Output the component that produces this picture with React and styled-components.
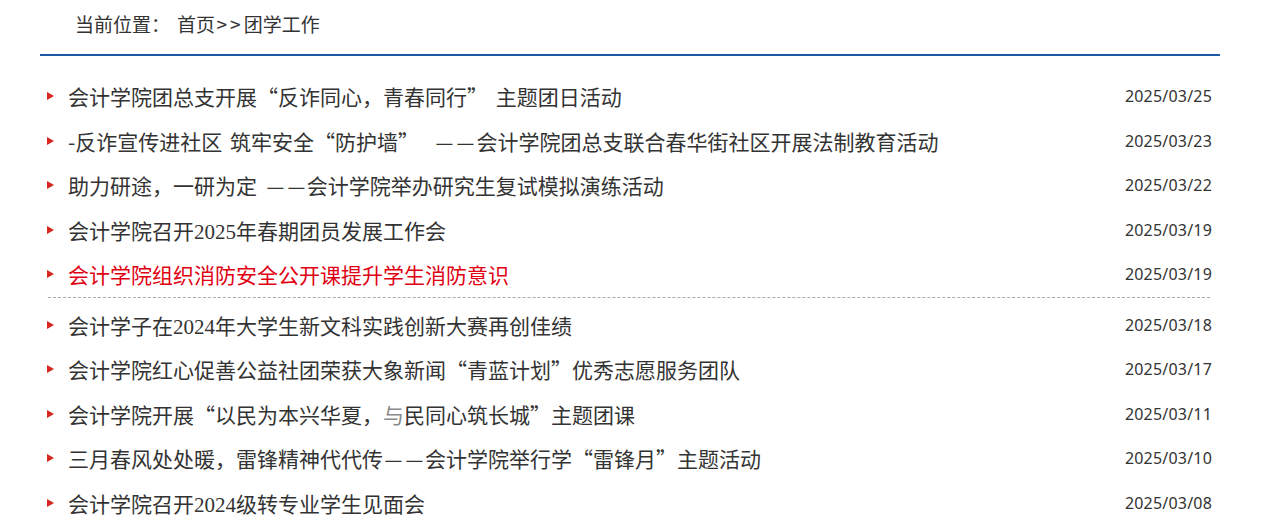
import styled, {createGlobalStyle} from 'styled-components';

const GlobalStyle = createGlobalStyle`
  body {
    margin: 0;
    background: #fff;
    font-family: "Noto Sans CJK SC", "Noto Sans", sans-serif;
    color: #333;
  }
`;

const Page = styled.div`
  width: 1180px;
  margin-left: 40px;
`;

const Breadcrumb = styled.div`
  height: 48px;
  line-height: 48px;
  padding: 0 0 6px 35px;
  border-bottom: 2px solid #1a5aa6;
  font-size: 19px;
  color: #333;
  white-space: pre;
`;

const Crumbs = styled.span`
  margin-left: 7px;
`;

const Sep = styled.span`
  margin-left: 1.5px;
  letter-spacing: 3px;
`;

const List = styled.ul`
  list-style: none;
  margin: 18px 0 0;
  padding: 0 8px 0 7px;
`;

const Row = styled.li`
  display: flex;
  align-items: center;
  height: 44.5px;
`;

const Arrow = styled.span`
  flex: none;
  width: 0;
  height: 0;
  border-top: 4px solid transparent;
  border-bottom: 4px solid transparent;
  border-left: 7px solid #d7261e;
  margin-right: 14px;
`;

const Title = styled.span`
  flex: 1;
  font-size: 21px;
  word-spacing: 3px;
  color: ${p => (p.$hot ? '#e00012' : '#333')};
  white-space: pre;
  overflow: hidden;
`;

const Num = styled.span`
  font-family: "Liberation Serif", serif;
`;

const DashCell = styled.span`
  display: inline-block;
  width: 1em;
  text-align: center;
  vertical-align: top;
  transform: scaleX(0.95);
`;

const Faded = styled.span`
  color: #8a8a8a;
`;

const PubDate = styled.span`
  flex: none;
  font-family: "Noto Sans", sans-serif;
  font-size: 16px;
  letter-spacing: 0.2px;
  color: #333;
`;

const Divider = styled.li`
  border-top: 1px dashed #aaa;
  margin: 0.5px 2px 4.5px 1px;
`;

function Dash() {
  return (
    <>
      <DashCell>—</DashCell>
      <DashCell>—</DashCell>
    </>
  );
}

const news = [
  {title: <>会计学院团总支开展“反诈同心，青春同行” 主题团日活动</>, date: '2025/03/25'},
  {title: <>-反诈宣传进社区 筑牢安全“防护墙”  <Dash />会计学院团总支联合春华街社区开展法制教育活动</>, date: '2025/03/23'},
  {title: <>助力研途，一研为定 <Dash />会计学院举办研究生复试模拟演练活动</>, date: '2025/03/22'},
  {title: <>会计学院召开<Num>2025</Num>年春期团员发展工作会</>, date: '2025/03/19'},
  {title: <>会计学院组织消防安全公开课提升学生消防意识</>, date: '2025/03/19', hot: true},
];

const moreNews = [
  {title: <>会计学子在<Num>2024</Num>年大学生新文科实践创新大赛再创佳绩</>, date: '2025/03/18'},
  {title: <>会计学院红心促善公益社团荣获大象新闻“青蓝计划”优秀志愿服务团队</>, date: '2025/03/17'},
  {title: <>会计学院开展“以民为本兴华夏，<Faded>与</Faded>民同心筑长城”主题团课</>, date: '2025/03/11'},
  {title: <>三月春风处处暖，雷锋精神代代传<Dash />会计学院举行学“雷锋月”主题活动</>, date: '2025/03/10'},
  {title: <>会计学院召开<Num>2024</Num>级转专业学生见面会</>, date: '2025/03/08'},
];

function NewsRow({title, date, hot}) {
  return (
    <Row>
      <Arrow />
      <Title $hot={hot}>{title}</Title>
      <PubDate>{date}</PubDate>
    </Row>
  );
}

export default function App() {
  return (
    <>
      <GlobalStyle />
      <Page>
        <Breadcrumb>
          当前位置：<Crumbs>首页<Sep>&gt;&gt;</Sep>团学工作</Crumbs>
        </Breadcrumb>
        <List>
          {news.map((item, i) => (
            <NewsRow key={i} {...item} />
          ))}
          <Divider />
          {moreNews.map((item, i) => (
            <NewsRow key={i} {...item} />
          ))}
        </List>
      </Page>
    </>
  );
}
